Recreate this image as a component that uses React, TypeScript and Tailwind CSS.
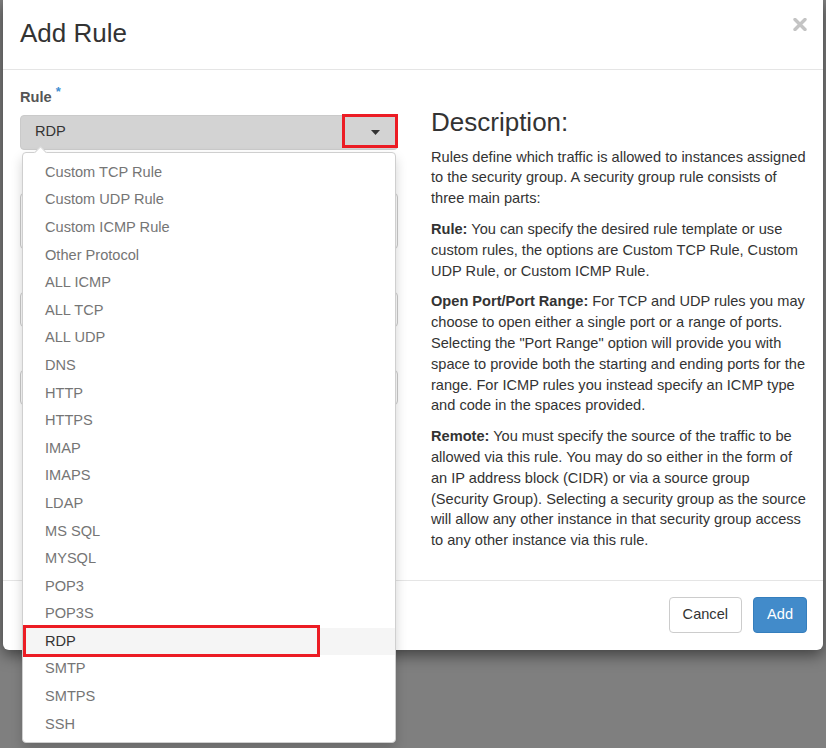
const rules = [
  "Custom TCP Rule",
  "Custom UDP Rule",
  "Custom ICMP Rule",
  "Other Protocol",
  "ALL ICMP",
  "ALL TCP",
  "ALL UDP",
  "DNS",
  "HTTP",
  "HTTPS",
  "IMAP",
  "IMAPS",
  "LDAP",
  "MS SQL",
  "MYSQL",
  "POP3",
  "POP3S",
  "RDP",
  "SMTP",
  "SMTPS",
  "SSH",
];

const selected = "RDP";

const RuleMenu: React.FC = () => {
  return (
    <div className="absolute left-[2px] top-[37px] z-10 w-[374px] rounded-[4px] border border-[#cfcfcf] bg-white pb-[4px] pt-[6px] shadow-[0_6px_12px_rgba(0,0,0,0.175)]">
      <div className="absolute left-[13px] top-[-5px] h-[9px] w-[9px] rotate-45 border-l border-t border-[#d5d5d5] bg-white" />
      {rules.map((r) => (
        <div
          key={r}
          className={
            r === selected
              ? "relative h-[27.6px] bg-[#f5f5f5] pl-[22px] leading-[27.6px] text-[#333]"
              : "relative h-[27.6px] pl-[22px] leading-[27.6px] text-[#757575]"
          }
        >
          {r}
          {r === selected && (
            <div className="absolute left-0 top-[-3px] h-[32px] w-[297px] border-[3px] border-[#ec1c24]" />
          )}
        </div>
      ))}
    </div>
  );
};

// fields hidden behind the open menu, only their edges show
const Field: React.FC<{ tall?: boolean }> = ({ tall }) => (
  <div className="mt-[15px] pt-[28px]">
    <div
      className={
        tall
          ? "h-[56px] rounded-[4px] border border-[#ccc] bg-white"
          : "h-[35px] rounded-[4px] border border-[#ccc] bg-white"
      }
    />
  </div>
);

export default function App() {
  return (
    <div className="relative h-[748px] w-[826px] overflow-hidden bg-[#7f7f7f] font-['Liberation_Sans',Arial,sans-serif] text-[14.6px]">
      <div className="ml-[3px] w-[820px] rounded-b-[6px] bg-white text-[#333] shadow-[0_5px_15px_rgba(0,0,0,0.5)]">
        {/* header */}
        <div className="flex h-[70px] items-start justify-between border-b border-[#e5e5e5] pl-[17px] pr-[16px]">
          <h4 className="pt-[19px] text-[26px] leading-[28.6px] text-[#333]">Add Rule</h4>
          <svg className="mt-[18px]" width="14" height="13" viewBox="0 0 14 13">
            <path
              d="M2 1.5 L12 11.5 M12 1.5 L2 11.5"
              stroke="#c4c4c4"
              strokeWidth="3.4"
              strokeLinecap="round"
            />
          </svg>
        </div>

        {/* body */}
        <div className="flex h-[510px] gap-[33px] pl-[17px] pt-[17px]">
          <div className="w-[378px]">
            <div className="mb-[7px] leading-[20.8px] font-bold text-[#555]">
              Rule <sup className="text-[13px] text-[#3f8fd2]">*</sup>
            </div>
            <div className="relative">
              <div className="flex h-[35px] items-center justify-between rounded-[4px] border border-[#cacaca] bg-[#d3d3d3] pl-[14px] pr-[17px]">
                <span className="text-[#333]">RDP</span>
                <svg width="9" height="5" viewBox="0 0 9 5">
                  <path d="M0 0 L9 0 L4.5 5 Z" fill="#333" />
                </svg>
              </div>
              <div className="absolute left-[322px] top-[-1px] h-[34px] w-[56px] border-[3px] border-[#ec1c24]" />
              <RuleMenu />
            </div>
            <Field tall />
            <Field />
            <Field />
          </div>

          <div className="w-[378px]">
            <h3 className="mb-[10px] mt-[21px] text-[26px] leading-[28.6px] text-[#333]">Description:</h3>
            <p className="mb-[10px] leading-[20.8px]">
              Rules define which traffic is allowed to instances assigned to the security group. A
              security group rule consists of three main parts:
            </p>
            <p className="mb-[10px] leading-[20.8px]">
              <b>Rule:</b> You can specify the desired rule template or use custom rules, the options
              are Custom TCP Rule, Custom UDP Rule, or Custom ICMP Rule.
            </p>
            <p className="mb-[10px] leading-[20.8px]">
              <b>Open Port/Port Range:</b> For TCP and UDP rules you may choose to open either a
              single port or a range of ports. Selecting the "Port Range" option will provide you with
              space to provide both the starting and ending ports for the range. For ICMP rules you
              instead specify an ICMP type and code in the spaces provided.
            </p>
            <p className="mb-[10px] leading-[20.8px]">
              <b>Remote:</b> You must specify the source of the traffic to be allowed via this rule.
              You may do so either in the form of an IP address block (CIDR) or via a source group
              (Security Group). Selecting a security group as the source will allow any other instance
              in that security group access to any other instance via this rule.
            </p>
          </div>
        </div>

        {/* footer */}
        <div className="flex justify-end gap-[11px] border-t border-[#e5e5e5] pb-[17px] pr-[16px] pt-[16px]">
          <button className="h-[36px] rounded-[4px] border border-[#ccc] bg-white px-[13px] text-[#333]">
            Cancel
          </button>
          <button className="h-[36px] rounded-[4px] border border-[#357ebd] bg-[#428bca] px-[13px] text-white">
            Add
          </button>
        </div>
      </div>
    </div>
  );
}
